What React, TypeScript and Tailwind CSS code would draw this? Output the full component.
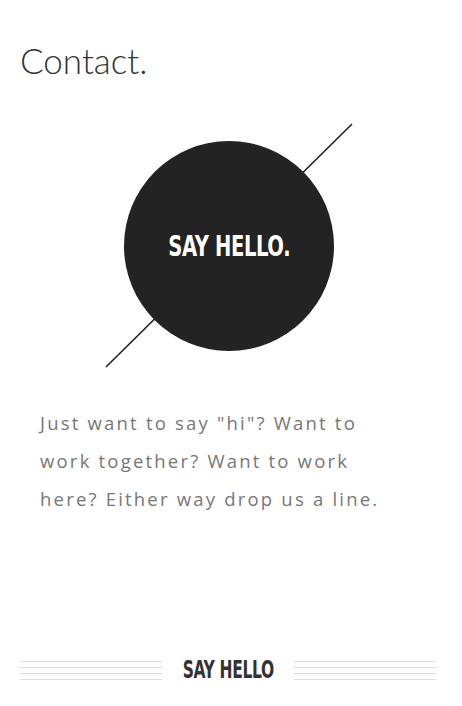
import React from 'react';

const condensed = { fontFamily: '"DejaVu Sans Condensed", "DejaVu Sans", sans-serif' };

function Rules() {
  return (
    <div className="flex-1 flex flex-col gap-[5px]">
      <div className="h-px bg-[#ddd]" />
      <div className="h-px bg-[#ddd]" />
      <div className="h-px bg-[#ddd]" />
      <div className="h-px bg-[#ddd]" />
    </div>
  );
}

export default function App() {
  return (
    <div className="w-[462px] h-[706px] bg-white flex flex-col overflow-hidden">
      {/* heading */}
      <h1 className="pl-[20px] pt-[38px] text-[35px] leading-[44px] font-light text-[#333] font-['Lato',sans-serif]">
        Contact.
      </h1>

      {/* circle with the diagonal stroke */}
      <div className="relative mt-[39px] w-full h-[250px]">
        <svg className="absolute inset-0" width="462" height="250" viewBox="0 0 462 250">
          <line x1="106" y1="246" x2="352" y2="3" stroke="#222" strokeWidth="1.6" />
        </svg>
        <div className="absolute left-[124px] top-[20px] w-[210px] h-[210px] rounded-full bg-[#232323] flex items-center justify-center">
          <span
            className="text-white font-bold text-[29px] leading-none tracking-[-0.5px] scale-x-[0.75] inline-block whitespace-nowrap"
            style={condensed}
          >
            SAY HELLO.
          </span>
        </div>
      </div>

      {/* blurb */}
      <p className="mt-[33px] ml-[40px] w-[372px] text-[18.5px] leading-[38px] tracking-[2.2px] text-[#777] font-['Open_Sans',sans-serif]">
        Just want to say "hi"? Want to work together? Want to work here? Either way drop us a line.
      </p>

      {/* footer label */}
      <div className="mt-auto mb-[24px] pl-[20px] pr-[26px] flex items-center gap-[20px]">
        <Rules />
        <div className="w-[92px] flex justify-center">
          <span
            className="text-[#333] font-bold text-[24px] leading-none tracking-[-0.5px] scale-x-[0.72] inline-block whitespace-nowrap"
            style={condensed}
          >
            SAY HELLO
          </span>
        </div>
        <Rules />
      </div>
    </div>
  );
}
